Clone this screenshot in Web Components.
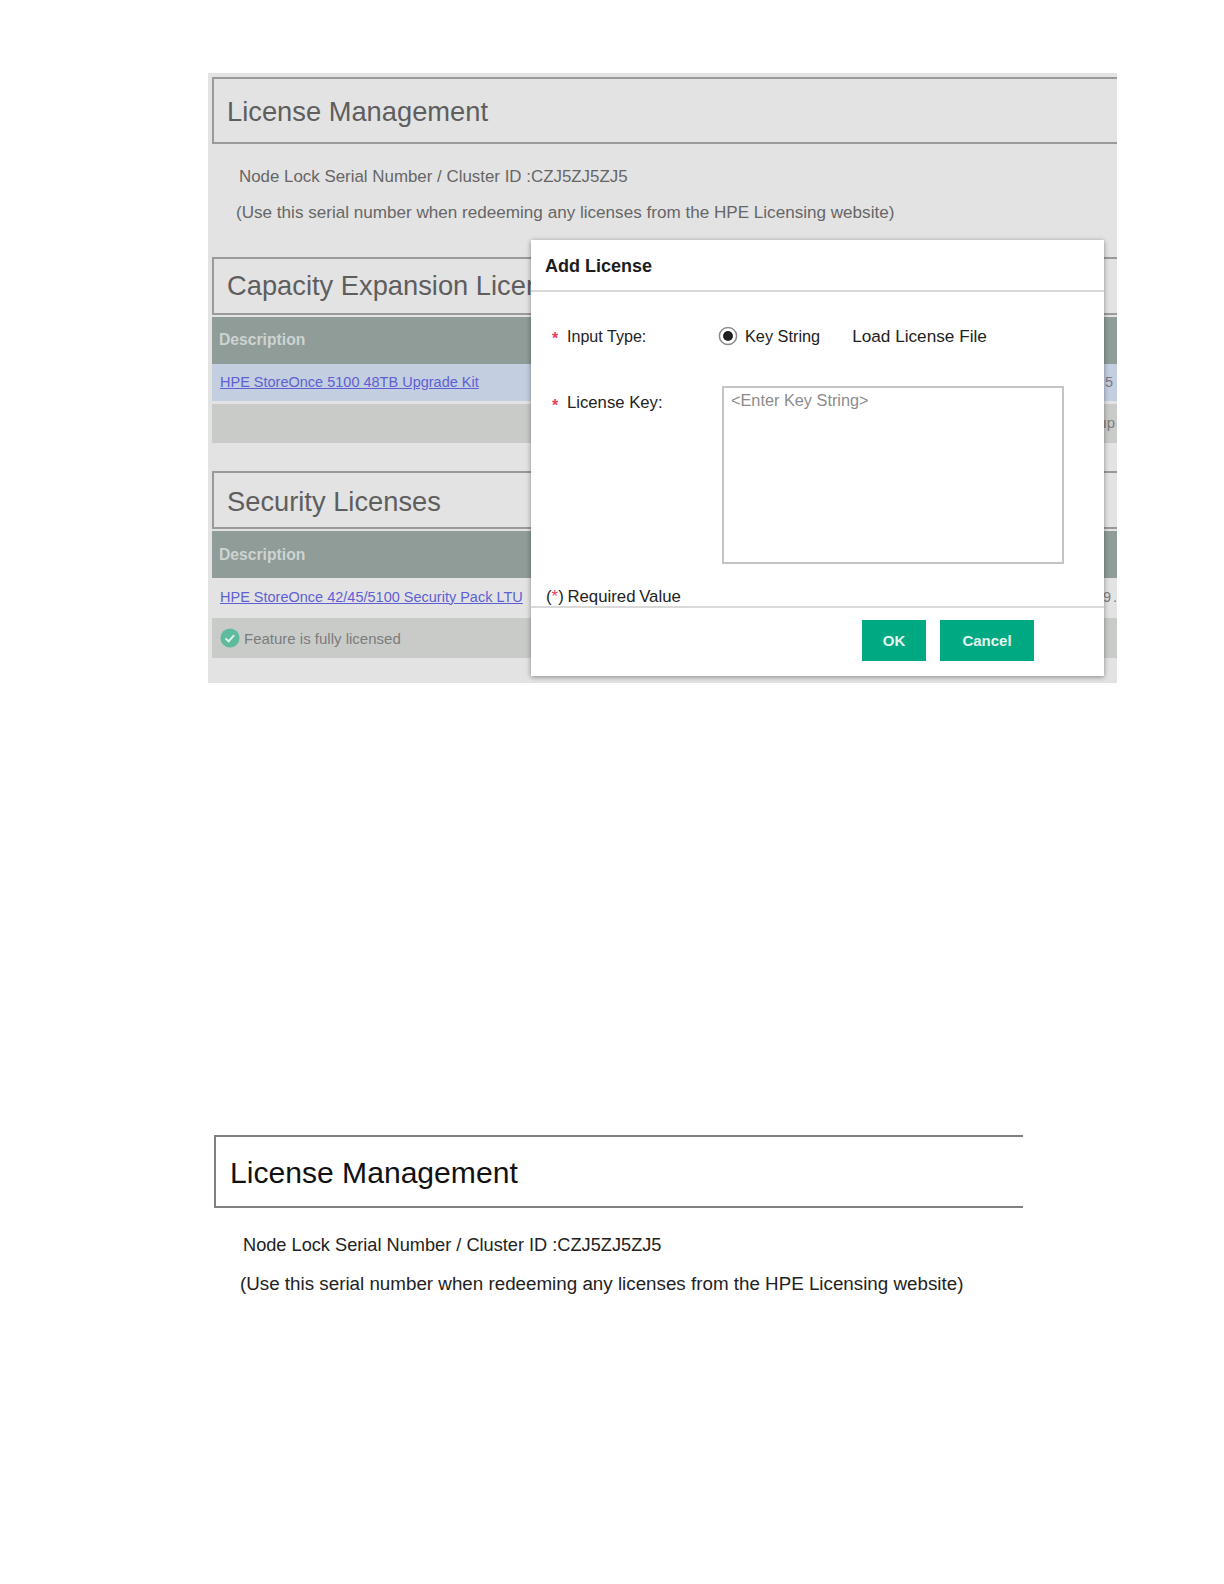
<!DOCTYPE html>
<html>
<head>
<meta charset="utf-8">
<title>License Management</title>
<style>
  html, body { margin: 0; background: #fff; }
  body { font-family: "Liberation Sans", Arial, sans-serif; height: 1584px; overflow: hidden; }
  license-shot { margin: 73px 0 0 208px; }
  plain-shot { margin: 452px 0 0 214px; }
</style>
</head>
<body>
<license-shot>
  <title-box size="27.3" height="67" color="#5e5e5e" style="padding-top:2px">License Management</title-box>
  <serial-note></serial-note>

  <title-box size="27.3" height="58" color="#5e5e5e" style="margin-top:34px">Capacity Expansion Licen</title-box>
  <grid-band kind="head" height="47" style="margin-top:2px;padding-bottom:2px">Description</grid-band>
  <grid-band kind="selected" height="37" style="padding-right:4px;padding-bottom:2px" tail="5"><a href="#">HPE StoreOnce 5100 48TB Upgrade Kit</a></grid-band>
  <grid-band kind="status" height="39" style="margin-top:3px;padding-bottom:2px" tail="up"></grid-band>

  <title-box size="27.3" height="58" color="#5e5e5e" style="margin-top:28px;padding-top:3px">Security Licenses</title-box>
  <grid-band kind="head" height="47" style="margin-top:2px">Description</grid-band>
  <grid-band kind="plain" height="39" style="margin-top:1px;padding-bottom:4px;padding-right:0" tail="9 ."><a href="#">HPE StoreOnce 42/45/5100 Security Pack LTU</a></grid-band>
  <grid-band kind="status" height="40"><check-badge></check-badge>Feature is fully licensed</grid-band>

  <add-license-dialog></add-license-dialog>
</license-shot>

<plain-shot>
  <title-box size="30.1" height="73" color="#111" border="#808080" inset="14" style="padding-top:2px">License Management</title-box>
  <div style="padding:26px 0 0 29px;font-size:18.2px;line-height:22px;color:#222">Node Lock Serial Number / Cluster ID :CZJ5ZJ5ZJ5</div>
  <div style="padding:17px 0 0 26px;font-size:18.8px;line-height:22px;color:#222;white-space:nowrap">(Use this serial number when redeeming any licenses from the HPE Licensing website)</div>
</plain-shot>

<script>
  class LicenseShot extends HTMLElement {
    constructor() {
      super();
      this.attachShadow({ mode: 'open' });
      this.shadowRoot.innerHTML = `
        <style>
          :host {
            display: block;
            position: relative;
            box-sizing: border-box;
            width: 909px;
            height: 610px;
            padding: 4px 0 0 4px;
            background: #e3e3e3;
            overflow: hidden;
          }
        </style>
        <slot></slot>
      `;
    }
  }

  class PlainShot extends HTMLElement {
    constructor() {
      super();
      this.attachShadow({ mode: 'open' });
      this.shadowRoot.innerHTML = `
        <style>
          :host { display: block; width: 809px; overflow: hidden; }
        </style>
        <slot></slot>
      `;
    }
  }

  class TitleBox extends HTMLElement {
    constructor() {
      super();
      this.attachShadow({ mode: 'open' });
      const size = this.getAttribute('size') || 27;
      const height = this.getAttribute('height') || 60;
      const color = this.getAttribute('color') || '#555';
      const border = this.getAttribute('border') || '#9a9a9a';
      const inset = this.getAttribute('inset') || 13;
      this.shadowRoot.innerHTML = `
        <style>
          :host {
            display: flex;
            align-items: center;
            box-sizing: border-box;
            height: ${height}px;
            padding-left: ${inset}px;
            border: 2px solid ${border};
            border-right: 0;
            font-size: ${size}px;
            color: ${color};
            white-space: nowrap;
          }
        </style>
        <slot></slot>
      `;
    }
  }

  class SerialNote extends HTMLElement {
    constructor() {
      super();
      this.attachShadow({ mode: 'open' });
      this.shadowRoot.innerHTML = `
        <style>
          :host {
            display: block;
            line-height: 20px;
            color: #666;
            white-space: nowrap;
          }
          .serial { width: 389px; margin: 23px 0 0 27px; overflow: hidden; font-size: 16.9px; }
          .usage { margin: 16px 0 0 24px; font-size: 17.1px; }
        </style>
        <div class="serial">Node Lock Serial Number / Cluster ID :CZJ5ZJ5ZJ5</div>
        <div class="usage">(Use this serial number when redeeming any licenses from the HPE Licensing website)</div>
      `;
    }
  }

  class GridBand extends HTMLElement {
    constructor() {
      super();
      this.attachShadow({ mode: 'open' });
      const height = this.getAttribute('height') || 38;
      const tail = this.getAttribute('tail') || '';
      this.shadowRoot.innerHTML = `
        <style>
          :host {
            display: flex;
            align-items: center;
            justify-content: space-between;
            box-sizing: border-box;
            height: ${height}px;
            padding: 0 2px 0 8px;
            font-size: 14.5px;
            color: #7c7c7c;
            white-space: nowrap;
          }
          :host([kind="head"]) { background: #8f9c98; color: #cdd3d1; font-weight: bold; font-size: 15.7px; padding-left: 7px; }
          :host([kind="selected"]) { background: #c3cee0; }
          :host([kind="status"]) { background: #c9cbc9; font-size: 15px; }
          ::slotted(a) { color: #5f5fd4; }
          .main { display: flex; align-items: center; gap: 4px; }
          .tail { word-spacing: -2px; }
        </style>
        <div class="main"><slot></slot></div>
        <div class="tail">${tail}</div>
      `;
    }
  }

  class CheckBadge extends HTMLElement {
    constructor() {
      super();
      this.attachShadow({ mode: 'open' });
      this.shadowRoot.innerHTML = `
        <style>
          :host { display: block; width: 20px; height: 20px; }
          svg { display: block; }
        </style>
        <svg width="20" height="20" viewBox="0 0 20 20">
          <circle cx="10" cy="10" r="9.6" fill="#5fbb9d"/>
          <path d="M5.6 10.4l3 3 5.6-6.2" fill="none" stroke="#e4f3ee" stroke-width="2"/>
        </svg>
      `;
    }
  }

  class AddLicenseDialog extends HTMLElement {
    constructor() {
      super();
      this.attachShadow({ mode: 'open' });
      this.shadowRoot.innerHTML = `
        <style>
          :host {
            position: absolute;
            left: 323px;
            top: 167px;
            display: flex;
            flex-direction: column;
            box-sizing: border-box;
            width: 573px;
            height: 436px;
            background: #fff;
            box-shadow: 0 1px 5px rgba(0,0,0,.4);
            font-size: 16.5px;
            color: #222;
          }
          header {
            box-sizing: border-box;
            height: 52px;
            padding: 16px 0 0 14px;
            border-bottom: 2px solid #d9d9d9;
            font-size: 18px;
            line-height: 20px;
            font-weight: bold;
            color: #1c1c1c;
          }
          .form {
            display: grid;
            grid-template-columns: 170px 342px;
            grid-template-rows: 94px 178px;
            padding-left: 21px;
          }
          .label { display: flex; line-height: 20px; white-space: nowrap; }
          .label i {
            width: 15px;
            color: #e8405f;
            font-style: normal;
            font-weight: bold;
            font-size: 16px;
            transform: translateY(3px);
          }
          .type { padding-top: 34px; font-size: 16.1px; }
          .keylabel { padding-top: 7px; font-size: 16.7px; }
          .choices { display: flex; align-items: flex-start; padding-top: 34px; margin-left: -4px; line-height: 20px; white-space: nowrap; }
          .choices svg { margin-right: 7px; flex: none; }
          .key-string { font-size: 16.3px; }
          .load-file { font-size: 17.2px; margin-left: 32px; }
          .keybox {
            box-sizing: border-box;
            padding: 3px 7px;
            border: 2px solid #c4c4c4;
            color: #8c8c8c;
            font-size: 16.3px;
            line-height: 18px;
          }
          .required {
            box-sizing: border-box;
            height: 42px;
            padding: 23px 0 0 15px;
            font-size: 16.8px;
            line-height: 20px;
            word-spacing: -1px;
            white-space: nowrap;
          }
          .required b { font-weight: normal; color: #e8405f; }
          footer {
            display: flex;
            justify-content: flex-end;
            gap: 14px;
            padding: 12px 70px 0 0;
            border-top: 2px solid #d9d9d9;
          }
          button {
            height: 41px;
            border: 0;
            padding: 0;
            background: #01a982;
            color: #e2f5ef;
            font: bold 15px "Liberation Sans", Arial, sans-serif;
          }
          .ok { width: 64px; }
          .cancel { width: 94px; }
        </style>
        <header>Add License</header>
        <div class="form">
          <div class="label type"><i>*</i><span>Input Type:</span></div>
          <div class="choices">
            <svg width="20" height="20" viewBox="0 0 20 20">
              <circle cx="10" cy="10" r="8.6" fill="#fff" stroke="#8a8a8a" stroke-width="1.5"/>
              <circle cx="10" cy="10" r="5" fill="#222"/>
            </svg>
            <span class="key-string">Key String</span><span class="load-file">Load License File</span>
          </div>
          <div class="label keylabel"><i>*</i><span>License Key:</span></div>
          <div class="keybox">&lt;Enter Key String&gt;</div>
        </div>
        <div class="required">(<b>*</b>) Required Value</div>
        <footer>
          <button class="ok">OK</button>
          <button class="cancel">Cancel</button>
        </footer>
      `;
    }
  }

  customElements.define('license-shot', LicenseShot);
  customElements.define('plain-shot', PlainShot);
  customElements.define('title-box', TitleBox);
  customElements.define('serial-note', SerialNote);
  customElements.define('grid-band', GridBand);
  customElements.define('check-badge', CheckBadge);
  customElements.define('add-license-dialog', AddLicenseDialog);
</script>
</body>
</html>
